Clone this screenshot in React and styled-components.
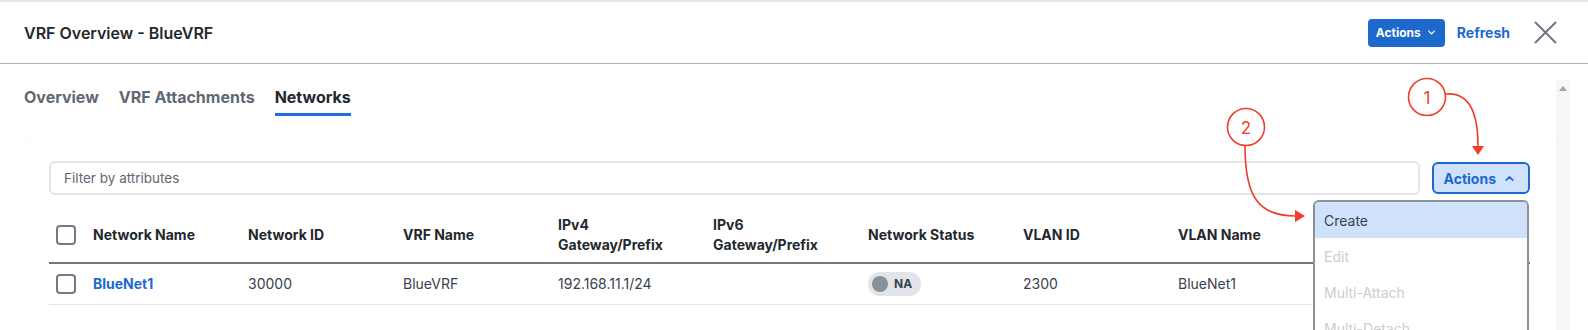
import React from "react";
import styled, { createGlobalStyle } from "styled-components";
import { ChevronDown, ChevronUp } from "lucide-react";

const GlobalStyle = createGlobalStyle`
  html, body {
    margin: 0;
    padding: 0;
    background: #fff;
    overflow: hidden;
  }
  body {
    font-family: Inter, "Noto Sans", sans-serif;
    color: #39424e;
  }
  * {
    box-sizing: border-box;
  }
`;

const Page = styled.div`
  position: relative;
  width: 1588px;
  height: 330px;
  overflow: hidden;
  background: #fff;
`;

const Header = styled.header`
  display: flex;
  align-items: center;
  height: 64px;
  padding: 0 31px 0 24px;
  border-top: 2px solid #e3e6ea;
  border-bottom: 1px solid #aeb3b9;
`;

const Title = styled.h1`
  flex: 1;
  margin: 0;
  font-size: 16px;
  font-weight: 600;
  color: #23282e;
`;

const HeaderActions = styled.div`
  display: flex;
  align-items: center;
  gap: 12px;
`;

const PrimaryButton = styled.button`
  display: inline-flex;
  align-items: center;
  gap: 5px;
  height: 28px;
  padding: 0 8px;
  border: none;
  border-radius: 4px;
  background: #1d69cc;
  color: #fff;
  font-family: Inter, sans-serif;
  font-size: 12px;
  font-weight: 700;
`;

const LinkButton = styled.button`
  padding: 0;
  border: none;
  background: none;
  color: #1d69cc;
  font-family: Inter, sans-serif;
  font-size: 14px;
  font-weight: 700;
`;

const CloseButton = styled.button`
  display: flex;
  margin-left: 12px;
  padding: 0;
  border: none;
  background: none;
`;

const Body = styled.div`
  display: flex;
  padding-right: 18px;
`;

const Main = styled.div`
  flex: 1;
  min-width: 0;
  padding-left: 25px;
`;

const ScrollTrack = styled.div`
  display: flex;
  justify-content: center;
  width: 14px;
  height: 260px;
  margin-top: 16px;
  padding-top: 6px;
  background: #f6f6f6;
`;

const ScrollArrow = styled.div`
  width: 0;
  height: 0;
  border-left: 4px solid transparent;
  border-right: 4px solid transparent;
  border-bottom: 5px solid #a3a3a3;
`;

const Tabs = styled.nav`
  display: flex;
  gap: 20px;
  padding-top: 21px;
  margin-left: -1px;
`;

const Tab = styled.div`
  padding-bottom: 4px;
  border-bottom: 3px solid ${(p) => (p.$active ? "#1e6fd9" : "transparent")};
  color: ${(p) => (p.$active ? "#23282e" : "#5f6873")};
  font-size: 16px;
  font-weight: 700;
  line-height: 24px;
`;

const Card = styled.section`
  min-height: 260px;
  margin-top: 21px;
  padding: 24px 26px 24px 24px;
  border-radius: 8px;
  background: #fff;
  box-shadow: 0 0 2px rgba(0, 0, 0, 0.05);
`;

const Toolbar = styled.div`
  display: flex;
  align-items: center;
  gap: 12px;
`;

const FilterInput = styled.input`
  flex: 1;
  height: 34px;
  padding: 0 13px;
  border: 2px solid #e1e4e8;
  border-radius: 6px;
  font-family: Inter, sans-serif;
  font-size: 13.5px;
  color: #39424e;
  &::placeholder {
    color: #5f6873;
  }
`;

const MenuAnchor = styled.div`
  position: relative;
`;

const SecondaryButton = styled.button`
  display: inline-flex;
  align-items: center;
  gap: 7px;
  height: 32px;
  padding: 0 12px 0 10px;
  border: 2px solid #1d69cc;
  border-radius: 6px;
  background: #d0e2fb;
  color: #1d69cc;
  font-family: Inter, sans-serif;
  font-size: 14px;
  font-weight: 700;
`;

const Menu = styled.ul`
  position: absolute;
  top: calc(100% + 6px);
  right: 1px;
  z-index: 2;
  width: 216px;
  margin: 0;
  padding: 0;
  list-style: none;
  border: 2px solid #8b929b;
  border-radius: 6px;
  background: #fff;
  overflow: hidden;
`;

const MenuItem = styled.li`
  display: flex;
  align-items: center;
  height: 36px;
  padding: 0 9px;
  background: ${(p) => (p.$active ? "#d0e2fb" : "transparent")};
  color: ${(p) => (p.$disabled ? "#c9cdd2" : "#39424e")};
  font-size: 14px;
`;

const Table = styled.div`
  margin-top: 12px;
`;

const Row = styled.div`
  display: grid;
  grid-template-columns: 44px repeat(7, 155px) 1fr;
  align-items: center;
  min-height: ${(p) => (p.$head ? "57px" : "41px")};
  border-bottom: ${(p) => (p.$head ? "2px solid #6f7680" : "1px solid #e1e4e8")};
`;

const HeadCell = styled.div`
  color: #23282e;
  font-size: 14px;
  font-weight: 700;
  line-height: 20px;
`;

const Cell = styled.div`
  color: #39424e;
  font-size: 14px;
  line-height: 20px;
`;

const CheckCell = styled.div`
  display: flex;
  padding-left: 7px;
`;

const Checkbox = styled.span`
  width: 20px;
  height: 20px;
  border: 2px solid #737b86;
  border-radius: 4px;
  background: #fff;
`;

const NameLink = styled.a`
  color: #1d69cc;
  font-weight: 700;
  text-decoration: none;
`;

const StatusPill = styled.span`
  display: inline-flex;
  align-items: center;
  gap: 6px;
  height: 24px;
  padding: 0 9px 0 4px;
  border-radius: 12px;
  background: #e1e4e8;
  color: #39424e;
  font-size: 12px;
  font-weight: 700;
`;

const StatusDot = styled.span`
  width: 16px;
  height: 16px;
  border-radius: 50%;
  background: #889099;
`;

const Annotations = styled.svg`
  position: absolute;
  top: 0;
  left: 0;
  z-index: 5;
  pointer-events: none;
`;

const columns = [
  ["Network Name"],
  ["Network ID"],
  ["VRF Name"],
  ["IPv4", "Gateway/Prefix"],
  ["IPv6", "Gateway/Prefix"],
  ["Network Status"],
  ["VLAN ID"],
  ["VLAN Name"],
];

const menuItems = [
  { label: "Create", active: true },
  { label: "Edit", disabled: true },
  { label: "Multi-Attach", disabled: true },
  { label: "Multi-Detach", disabled: true },
];

const RED = "#f23d2a";

const App = () => {
  return (
    <Page>
      <GlobalStyle />
      <Header>
        <Title>VRF Overview - BlueVRF</Title>
        <HeaderActions>
          <PrimaryButton>
            Actions
            <ChevronDown size={11} strokeWidth={3} />
          </PrimaryButton>
          <LinkButton>Refresh</LinkButton>
          <CloseButton>
            <svg width="23" height="23" viewBox="0 0 23 23">
              <path d="M1 1 L22 22 M22 1 L1 22" stroke="#6f7680" strokeWidth="2" fill="none" />
            </svg>
          </CloseButton>
        </HeaderActions>
      </Header>

      <Body>
        <Main>
          <Tabs>
            <Tab>Overview</Tab>
            <Tab>VRF Attachments</Tab>
            <Tab $active>Networks</Tab>
          </Tabs>

          <Card>
            <Toolbar>
              <FilterInput placeholder="Filter by attributes" />
              <MenuAnchor>
                <SecondaryButton>
                  Actions
                  <ChevronUp size={13} strokeWidth={3.2} />
                </SecondaryButton>
                <Menu>
                  {menuItems.map((item) => (
                    <MenuItem key={item.label} $active={item.active} $disabled={item.disabled}>
                      {item.label}
                    </MenuItem>
                  ))}
                </Menu>
              </MenuAnchor>
            </Toolbar>

            <Table>
              <Row $head>
                <CheckCell>
                  <Checkbox />
                </CheckCell>
                {columns.map((lines) => (
                  <HeadCell key={lines.join(" ")}>
                    {lines.map((l) => (
                      <div key={l}>{l}</div>
                    ))}
                  </HeadCell>
                ))}
              </Row>
              <Row>
                <CheckCell>
                  <Checkbox />
                </CheckCell>
                <Cell>
                  <NameLink href="#">BlueNet1</NameLink>
                </Cell>
                <Cell>30000</Cell>
                <Cell>BlueVRF</Cell>
                <Cell>192.168.11.1/24</Cell>
                <Cell />
                <Cell>
                  <StatusPill>
                    <StatusDot />
                    NA
                  </StatusPill>
                </Cell>
                <Cell>2300</Cell>
                <Cell>BlueNet1</Cell>
              </Row>
            </Table>
          </Card>
        </Main>
        <ScrollTrack>
          <ScrollArrow />
        </ScrollTrack>
      </Body>

      <Annotations width="1588" height="330" viewBox="0 0 1588 330">
        <circle cx="1427" cy="97" r="18.5" fill="#fff" stroke={RED} strokeWidth="1.6" />
        <text x="1427" y="103.5" fill={RED} fontSize="17" textAnchor="middle" fontFamily="Inter, sans-serif">
          1
        </text>
        <path d="M1446 94 C1470 92 1478 114 1478 146" stroke={RED} strokeWidth="1.6" fill="none" />
        <path d="M1472 146 L1484 146 L1478 155 Z" fill={RED} />

        <circle cx="1246" cy="127" r="18.5" fill="#fff" stroke={RED} strokeWidth="1.6" />
        <text x="1246" y="133.5" fill={RED} fontSize="17" textAnchor="middle" fontFamily="Inter, sans-serif">
          2
        </text>
        <path d="M1245 146 C1245 196 1258 216 1295 216" stroke={RED} strokeWidth="1.6" fill="none" />
        <path d="M1295 210 L1295 222 L1305 216 Z" fill={RED} />
      </Annotations>
    </Page>
  );
};

export default App;
